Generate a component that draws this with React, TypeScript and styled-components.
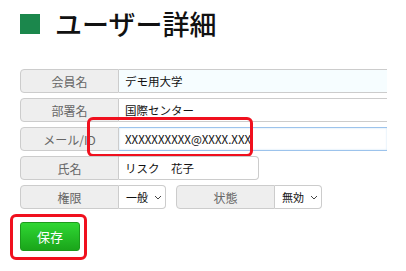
import React from "react";
import styled, { createGlobalStyle } from "styled-components";

const Global = createGlobalStyle`
  html, body { margin: 0; padding: 0; background: #fff; }
  body { font-family: "Noto Sans CJK JP", "Noto Sans", "Liberation Sans", sans-serif; }
  * { box-sizing: border-box; }
`;

const Page = styled.div`
  padding: 11px 0 0 20px;
  width: 406px;
  height: 271px;
  overflow: hidden;
`;

const Header = styled.h1`
  display: flex;
  align-items: center;
  gap: 15px;
  margin: 0;
  height: 26px;
  font-size: 27px;
  font-weight: 500;
  color: #111;
  line-height: 26px;
`;

const Square = styled.span`
  width: 20px;
  height: 20px;
  background: #1b874c;
  flex: none;
`;

const Form = styled.div`
  display: flex;
  flex-direction: column;
  gap: 5px;
  margin-top: 32px;
`;

const Row = styled.div`
  position: relative;
  display: flex;
  height: 24px;
`;

const Label = styled.div<{ $w?: number }>`
  width: ${(p) => p.$w ?? 99}px;
  flex: none;
  display: flex;
  align-items: center;
  justify-content: center;
  background: #eeeeee;
  border: 1px solid #cccccc;
  border-radius: 4px 0 0 4px;
  color: #666;
  font-size: 12px;
`;

const Field = styled.div<{ $bg?: string; $focus?: boolean; $w?: number; $open?: boolean }>`
  width: ${(p) => p.$w ?? 268}px;
  flex: none;
  display: flex;
  align-items: center;
  padding-left: 6px;
  background: ${(p) => p.$bg ?? "#fff"};
  border: 1px solid ${(p) => (p.$focus ? "#9cc3ec" : "#cccccc")};
  border-left: none;
  border-right: ${(p) => (p.$open ? "none" : `1px solid #cccccc`)};
  border-radius: ${(p) => (p.$open ? "0" : "0 4px 4px 0")};
  color: #111;
  font-family: "Noto Sans CJK JP", "Noto Sans", sans-serif;
  font-size: 11.5px;
  white-space: nowrap;
  overflow: hidden;
  box-shadow: ${(p) => (p.$focus ? "inset 0 0 2px rgba(102,175,233,0.4)" : "none")};
`;

const Select = styled(Field)`
  gap: 6px;
  padding-left: 7px;
  font-size: 11px;
`;

const Chevron = () => (
  <svg width="8" height="5" viewBox="0 0 8 5">
    <path d="M1 1 L4 4 L7 1" fill="none" stroke="#444" strokeWidth="1" />
  </svg>
);

const Spacer = styled.div`
  width: 10px;
  flex: none;
`;

const Highlight = styled.div<{ $l: number; $t: number; $w: number; $h: number }>`
  position: absolute;
  left: ${(p) => p.$l}px;
  top: ${(p) => p.$t}px;
  width: ${(p) => p.$w}px;
  height: ${(p) => p.$h}px;
  border: 3.5px solid #f0101e;
  border-radius: 6px;
  pointer-events: none;
`;

const Actions = styled.div`
  position: relative;
  margin-top: 13px;
  width: 60px;
`;

const SaveButton = styled.button`
  width: 60px;
  height: 29px;
  border: 1px solid #1c9a1c;
  border-radius: 3px;
  background: linear-gradient(#2fd733, #1aa51a);
  color: #fff;
  font-family: inherit;
  font-size: 13px;
  padding: 0;
  display: flex;
  align-items: center;
  justify-content: center;
`;

export default function App() {
  return (
    <>
      <Global />
      <Page>
        <Header>
          <Square />
          ユーザー詳細
        </Header>
        <Form>
          <Row>
            <Label>会員名</Label>
            <Field $bg="#f6fdff" $open>デモ用大学</Field>
          </Row>
          <Row>
            <Label>部署名</Label>
            <Field $open>国際センター</Field>
          </Row>
          <Row>
            <Label>メール/ID</Label>
            <Field $focus $open>XXXXXXXXXX@XXXX.XXX</Field>
            <Highlight $l={67} $t={-10} $w={166} $h={40} />
          </Row>
          <Row>
            <Label>氏名</Label>
            <Field $w={140}>リスク　花子</Field>
          </Row>
          <Row>
            <Label>権限</Label>
            <Select $w={47}>
              一般 <Chevron />
            </Select>
            <Spacer />
            <Label>状態</Label>
            <Select $w={47}>
              無効 <Chevron />
            </Select>
          </Row>
        </Form>
        <Actions>
          <SaveButton>保存</SaveButton>
          <Highlight $l={-10} $t={-8} $w={77} $h={46} />
        </Actions>
      </Page>
    </>
  );
}
